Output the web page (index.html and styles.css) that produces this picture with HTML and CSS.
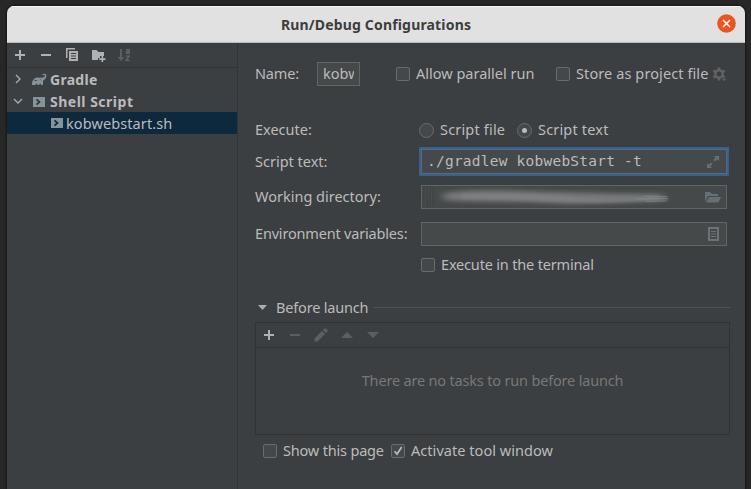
FILE: index.html
```html
<!DOCTYPE html>
<html lang="en">
<head>
<meta charset="utf-8">
<title>Run/Debug Configurations</title>
<link rel="stylesheet" href="styles.css">
</head>
<body>
<div class="dialog">
  <header class="titlebar">
    <h1 class="title">Run/Debug Configurations</h1>
    <button class="close" aria-label="Close"><svg width="19" height="19" viewBox="0 0 19 19"><circle cx="9.5" cy="9.5" r="9.3" fill="#e95420"/><path d="M6 6l7 7M13 6l-7 7" stroke="#fff" stroke-width="1.5"/></svg></button>
  </header>
  <div class="content">
    <aside class="sidebar">
      <div class="toolbar">
        <svg class="tool" viewBox="0 0 16 16"><path d="M7 3h2v4h4v2H9v4H7V9H3V7h4z"/></svg>
        <svg class="tool" viewBox="0 0 16 16"><path d="M3 7h10v2H3z"/></svg>
        <svg class="tool" viewBox="0 0 16 16"><path d="M2 1h9v1.500H3.500V11H2z"/><path fill-rule="evenodd" d="M5 4h9v10H5zM7 6v1h5V6zM7 8.500v1h5v-1zM7 11v1h5v-1z"/></svg>
        <svg class="tool" viewBox="0 0 16 16"><path d="M2 3h4.500l2 2H14v4h-4v2H8v2H2z"/><path d="M11.500 9h1.700v2.200H15.500v1.700h-2.300V15h-1.700v-2.100H9.200v-1.700h2.300z"/></svg>
        <svg class="tool off" viewBox="0 0 16 16"><path d="M4 2h2v8h2.500L5 14 1.500 10H4z"/><path d="M10 2.700h3.200V7M13.200 4.500H10.500V6.400h2.700M9.700 9.200h3.500L10 13.300h3.600" fill="none" stroke="#626567" stroke-width="1.300"/></svg>
      </div>
      <div class="tree">
        <div class="node">
          <svg class="chevron" viewBox="0 0 10 10"><path d="M3 1l4 4-4 4"/></svg>
          <svg class="gradle" viewBox="0 0 16 14"><path d="M1 12C.8 8.500 2 5.600 5 4.700 7 4.100 9 5 10.500 4.800 12.700 4.600 14.300 3.500 14 2.300c-.3-.9-1.500-.7-2 .1l-.8-.6C12.100.3 14.800.3 15.300 2c.6 2.300-1.300 4.300-3.100 5.400C12 9 12 10.500 12 12h-1.800c-.1-1.700-1.800-1.700-2 0H6.500c-.2-1.700-1.800-1.700-2 0z" fill="#87939a"/><path d="M3 7l2 .8L6.500 7M9.500 6.500l1 .8" fill="none" stroke="#3c3f41" stroke-width=".8"/></svg>
          <span class="group t-gradle">Gradle</span>
        </div>
        <div class="node">
          <svg class="chevron" viewBox="0 0 10 10"><path d="M1 3l4 4 4-4"/></svg>
          <svg class="shell" viewBox="0 0 12 10"><path d="M0 0h12v10H0z" fill="#87939a"/><path d="M3.500 2.300L6.500 5l-3 2.700" fill="none" stroke="#30363a" stroke-width="1.700"/></svg>
          <span class="group t-shell">Shell Script</span>
        </div>
        <div class="node leaf selected">
          <svg class="shell" viewBox="0 0 12 10"><path d="M0 0h12v10H0z" fill="#87939a"/><path d="M3.500 2.300L6.500 5l-3 2.700" fill="none" stroke="#0d293e" stroke-width="1.700"/></svg>
          <span class="t-kob">kobwebstart.sh</span>
        </div>
      </div>
    </aside>
    <main class="editor">
      <div class="row name-row">
        <span class="label t-tight">Name:</span>
        <div class="field name-field"><span class="clip">kobw</span></div>
        <label class="option parallel"><i class="check"></i><span>Allow parallel run</span></label>
        <label class="option store"><i class="check"></i><span class="t-loose">Store as project file</span></label>
        <svg class="gear" viewBox="0 0 16 16"><g fill="none" stroke="#606264"><circle cx="7" cy="7" r="3.700" stroke-width="2.400"/><path d="M7 .5v2M7 11.500v2M1.400 3.700l1.700 1M10.900 9.300l1.700 1M1.400 10.300l1.700-1M10.900 4.700l1.700-1" stroke-width="2.600"/></g><path d="M9 11.200h6l-3 3.300z" fill="#606264" stroke="#3c3f41" stroke-width=".6"/></svg>
      </div>
      <div class="row execute-row">
        <span class="label">Execute:</span>
        <label class="option"><i class="radio"></i><span class="t-wide">Script file</span></label>
        <label class="option"><i class="radio on"></i><span class="t-wide">Script text</span></label>
      </div>
      <div class="row script-row">
        <span class="label">Script text:</span>
        <div class="field focused"><span class="code">./gradlew kobwebStart -t</span>
          <svg class="expand" viewBox="0 0 12 12"><path d="M7 0h5v5l-1.700-1.700L8 5.600 6.400 4l2.300-2.300zM5 12H0V7l1.700 1.700L4 6.400 5.600 8l-2.300 2.300z"/></svg></div>
      </div>
      <div class="row dir-row">
        <span class="label">Working directory:</span>
        <div class="field wide"><span class="smudge"><svg viewBox="0 0 270 22"><defs><filter id="soft" x="-10%" y="-50%" width="120%" height="200%"><feGaussianBlur stdDeviation="5 2"/></filter><filter id="edge" x="-10%" y="-50%" width="120%" height="200%"><feGaussianBlur stdDeviation="2 1"/></filter></defs><path d="M1 0h11v21H1z" fill="#3f4243" opacity=".6"/><path d="M3.500 2v18M6.500 2v18M9.500 2v18" stroke="#55595a" stroke-width=".7" opacity=".5"/><path d="M22 7C60 2 90 5 130 6s70 2 110 2v7c-43 1-80 4-115 2S62 17 22 14z" fill="#77797b" filter="url(#soft)"/><path d="M40 8c50 1 70-1 105 3s60 2 100-1v5c-38 0-54 3-98 1S76 13 40 13z" fill="#858789" opacity=".45" filter="url(#edge)"/><path d="M222 10l23 .5M215 13l31-.5M224 15.500l21-.5" stroke="#999b9c" stroke-width=".8" opacity=".5"/></svg></span>
          <svg class="folder" viewBox="0 0 16 12"><path d="M0 11V1h5l2 2h6v2H3z"/><path d="M4 6H16l-2.700 5.500H1z"/></svg></div>
      </div>
      <div class="row env-row">
        <span class="label t-tight">Environment variables:</span>
        <div class="field wide">
          <svg class="doc" viewBox="0 0 11 14"><path fill-rule="evenodd" d="M0 0h11v14H0zM2 2v10h7V2z"/><path d="M3 4h5v1H3zM3 6.500h5v1H3zM3 9h5v1H3z"/></svg></div>
      </div>
      <div class="row terminal-row">
        <label class="option"><i class="check"></i><span class="t-tight">Execute in the terminal</span></label>
      </div>
      <div class="section">
        <svg class="disclosure" viewBox="0 0 9 5"><path d="M0 0h9L4.500 5z"/></svg>
        <span class="t-tight">Before launch</span><span class="rule"></span>
      </div>
      <div class="tasks">
        <div class="task-tools">
          <svg class="tool" viewBox="0 0 16 16"><path d="M7 3h2v4h4v2H9v4H7V9H3V7h4z"/></svg>
          <svg class="tool off" viewBox="0 0 16 16"><path d="M3 7h10v2H3z"/></svg>
          <svg class="tool off" viewBox="0 0 16 16"><path d="M1.500 11.500L9 4l3 3-7.500 7.500h-3zM10 3l1.500-1.500c.5-.5 1-.5 1.500 0L14.500 3c.5.5.5 1 0 1.500L13 6z"/></svg>
          <svg class="tool off" viewBox="0 0 16 16"><path d="M2 11l6-6 6 6z"/></svg>
          <svg class="tool off" viewBox="0 0 16 16"><path d="M2 5h12l-6 6z"/></svg>
        </div>
        <div class="empty t-tight">There are no tasks to run before launch</div>
      </div>
      <div class="row footer-row">
        <label class="option"><i class="check"></i><span class="t-tight">Show this page</span></label>
        <label class="option"><i class="check"><svg viewBox="0 0 12 12"><path d="M2.500 6.200L5 9l4.700-7"/></svg></i><span class="t-act">Activate tool window</span></label>
      </div>
    </main>
  </div>
</div>
</body>
</html>
```

FILE: styles.css
```css
* { box-sizing: border-box; }
body {
  margin: 0;
  height: 489px;
  overflow: hidden;
  padding: 6px 6px 0 7px;
  background: #272727;
  color: #bbbbbb;
  font: 14.5px/22px "Noto Sans", sans-serif;
  white-space: nowrap;
}
svg { display: block; flex: none; }
.dialog {
  height: 483px;
  display: flex;
  flex-direction: column;
  background: #3c3f41;
  border-radius: 7px 7px 0 0;
  overflow: hidden;
  box-shadow: 0 0 2px 1px #181818;
}
.titlebar {
  height: 37px;
  flex: none;
  display: flex;
  align-items: center;
  position: relative;
  background: #e1e1e1;
  border-top: 1px solid #f6f6f6;
  border-bottom: 1px solid #b9bebc;
}
.title {
  flex: 1;
  margin: 0;
  text-align: center;
  font-size: 14px;
  font-weight: 700;
  letter-spacing: 0.17px;
  color: #3d3d3d;
}
.close {
  position: absolute;
  right: 9px;
  top: 7px;
  padding: 0;
  border: 0;
  background: none;
}
.content { flex: 1; display: flex; min-height: 0; }
.sidebar { width: 231px; flex: none; border-right: 1px solid #323537; }
.toolbar, .task-tools { display: flex; align-items: center; gap: 10px; }
.toolbar { height: 25px; padding-left: 5px; border-bottom: 1px solid #323232; }
.tool { width: 16px; height: 16px; fill: #afb1b3; }
.tool.off { fill: #5c5e60; }
.tree { padding-top: 1px; }
.node { height: 22px; display: flex; align-items: center; padding-left: 6px; }
.chevron { width: 10px; height: 10px; fill: none; stroke: #adadad; stroke-width: 1.3; margin-top: -2px; }
.gradle { width: 16px; height: 14px; margin: 0 3px 0 8px; }
.shell { width: 12px; height: 10px; margin: 0 5px 0 10px; }
.leaf { padding-left: 44px; }
.leaf .shell { margin: 0 3px 0 0; }
.selected { height: 22px; margin-top: -1px; background: #0d293e; }
.group { font-weight: 700; font-size: 14px; }
.t-gradle { letter-spacing: 0.28px; }
.t-shell { letter-spacing: 0.5px; }
.t-kob { letter-spacing: 0.1px; }
.t-tight { letter-spacing: -0.18px; }
.t-loose { letter-spacing: 0.1px; }
.t-wide { letter-spacing: 0.18px; }
.t-act { letter-spacing: 0.05px; }

.editor { flex: 1; padding: 19px 15px 0 17px; min-width: 0; }
.row { display: flex; align-items: center; height: 24px; }
.label { width: 166px; flex: none; }
.label, .option span { padding-bottom: 2px; }
.field {
  height: 24px;
  display: flex;
  align-items: center;
  justify-content: space-between;
  background: #45494a;
  border: 1px solid #646464;
}
.name-row .label { width: 62px; }
.name-field { width: 43px; padding: 0 5px 2px; }
.clip { overflow: hidden; }
.option { display: flex; align-items: center; gap: 6px; }
.parallel { margin-left: 36px; width: 160px; }
.store { width: 156px; }
.gear { width: 16px; height: 16px; margin-top: 1px; }
.check {
  width: 14px;
  height: 14px;
  flex: none;
  border: 1px solid #6b6b6b;
  border-radius: 2px;
  background: #43494a;
}
.check svg { width: 12px; height: 12px; fill: none; stroke: #bbb; stroke-width: 1.7; }
.radio {
  width: 15px;
  height: 15px;
  flex: none;
  display: grid;
  place-items: center;
  border: 1px solid #6b6b6b;
  border-radius: 50%;
  background: #43494a;
}
.radio.on::after { content: ""; width: 5px; height: 5px; border-radius: 50%; background: #bbb; }
.execute-row { margin-top: 32px; }
.execute-row .label { width: 164px; }
.execute-row .option { width: 98px; }
.script-row { margin-top: 5px; height: 29px; }
.script-row .label { width: 164px; }
.focused { width: 310px; height: 29px; border: 2px solid #3d6185; outline: 1px solid #466d94; outline-offset: -3px; padding: 0 8px 0 6px; }
.code { font: 14.5px/20px "DejaVu Sans Mono", monospace; letter-spacing: 0.23px; padding-bottom: 1px; }
.expand { width: 12px; height: 12px; fill: #6a6e70; }
.dir-row { margin-top: 9px; }
.wide { width: 306px; padding-right: 7px; }
.smudge svg { width: 270px; height: 22px; }
.folder { width: 16px; height: 12px; fill: #667074; margin-right: -2px; }
.env-row { margin-top: 13px; }
.doc { width: 11px; height: 14px; fill: #6c7376; margin-left: auto; }
.terminal-row { margin-top: 7px; padding-left: 166px; }
.section { display: flex; align-items: center; height: 22px; margin-top: 19px; padding-left: 3px; }
.disclosure { width: 9px; height: 5px; fill: #adadad; margin: 1px 9px 0 0; }
.rule { flex: 1; height: 1px; background: #515355; margin-left: 6px; }
.tasks { height: 113px; margin-top: 4px; border: 1px solid #323232; }
.task-tools { height: 25px; padding-left: 5px; border-bottom: 1px solid #323232; }
.empty { text-align: center; padding-top: 21px; color: #777777; }
.footer-row { margin-top: 4px; padding-left: 8px; }
.footer-row .option { width: 128px; }
```
